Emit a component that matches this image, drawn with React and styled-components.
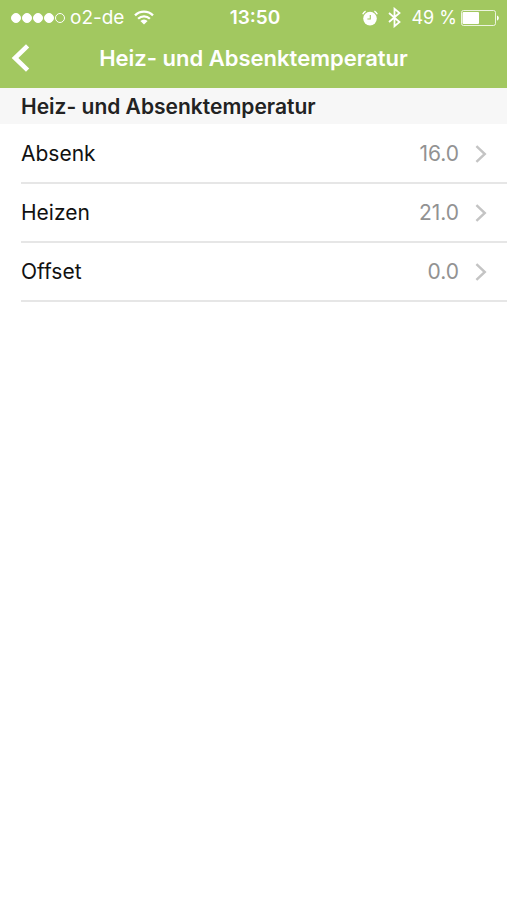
import React from 'react';
import styled, { createGlobalStyle } from 'styled-components';

const GlobalStyle = createGlobalStyle`
  * {
    box-sizing: border-box;
  }

  body {
    margin: 0;
    background-color: #fff;
    color: #111;
    font-family: Inter, 'Liberation Sans', sans-serif;
  }
`;

const Header = styled.header`
  background-color: #a2c860;
  color: #fff;
`;

const StatusBar = styled.div`
  display: grid;
  grid-template-columns: 1fr auto 1fr;
  align-items: center;
  height: 35px;
  padding: 0 8px 0 11px;
  font-size: 19px;
  line-height: 24px;
`;

const StatusGroup = styled.div`
  display: flex;
  align-items: center;
  justify-content: ${(props) => (props.$end ? 'flex-end' : 'flex-start')};
  gap: 10px;
  white-space: nowrap;
`;

const Carrier = styled.div`
  display: flex;
  align-items: center;
  gap: 5px;
`;

const Battery = styled.div`
  display: flex;
  align-items: center;
  gap: 4px;
  font-size: 18px;
`;

const Signal = styled.div`
  display: flex;
  gap: 1px;
`;

const Dot = styled.span`
  width: 10px;
  height: 10px;
  border: 1px solid #fff;
  border-radius: 50%;
  background-color: ${(props) => (props.$filled ? '#fff' : 'transparent')};
`;

const Time = styled.time`
  font-weight: 600;
`;

const NavBar = styled.nav`
  display: grid;
  grid-template-columns: 44px 1fr 44px;
  align-items: center;
  height: 53px;
  padding-bottom: 7px;
`;

const BackButton = styled.button`
  display: flex;
  align-items: center;
  height: 44px;
  padding: 0 0 0 11px;
  border: none;
  background: none;
  color: inherit;
  cursor: pointer;
`;

const Title = styled.h1`
  margin: 0;
  font-size: 22px;
  font-weight: 600;
  line-height: 28px;
  text-align: center;
  white-space: nowrap;
`;

const SectionTitle = styled.h2`
  margin: 0;
  padding: 5px 21px 3px;
  background-color: #f7f7f7;
  color: #222;
  font-size: 21px;
  font-weight: 600;
  line-height: 28px;
`;

const List = styled.ul`
  margin: 0;
  padding: 1px 0 0 21px;
  list-style: none;
`;

const Item = styled.li`
  border-bottom: 2px solid #e6e6e6;
`;

const RowButton = styled.button`
  display: flex;
  align-items: center;
  width: 100%;
  height: 57px;
  padding: 0 20px 0 0;
  border: none;
  background: none;
  color: inherit;
  font-family: inherit;
  font-size: 21px;
  line-height: 28px;
  text-align: left;
  cursor: pointer;
`;

const Value = styled.span`
  margin-left: auto;
  margin-right: 16px;
  color: #929292;
`;

const WifiIcon = () => (
  <svg width="20" height="15" viewBox="0 0 20 15" fill="none" stroke="#fff" strokeWidth="2.3">
    <path d="M1 5.4a12.8 12.8 0 0 1 18 0" />
    <path d="M4.1 8.7a8.4 8.4 0 0 1 11.8 0" />
    <path d="M10 14.6 6.4 11a5 5 0 0 1 7.2 0z" fill="#fff" stroke="none" />
  </svg>
);

const AlarmIcon = () => (
  <svg width="16" height="16" viewBox="0 0 16 16" fill="none">
    <circle cx="8" cy="8.6" r="6.8" fill="#fff" />
    <path d="M8.3 5v4H5.4" stroke="#a2c860" strokeWidth="1.1" />
    <path d="M.7 4.2A7 7 0 0 1 3.6 1.2M15.3 4.2A7 7 0 0 0 12.4 1.2" stroke="#fff" strokeWidth="1.4" />
  </svg>
);

const BluetoothIcon = () => (
  <svg width="13" height="21" viewBox="0 0 13 21" fill="none" stroke="#fff" strokeWidth="1.8">
    <path d="M1 6l10.5 9-5 4.2V1.8l5 4.2L1 15" />
  </svg>
);

const BatteryIcon = () => (
  <svg width="38" height="16" viewBox="0 0 38 16" fill="none">
    <rect x=".5" y=".5" width="34" height="15" rx="2" stroke="#fff" strokeOpacity=".8" />
    <rect x="1.5" y="2" width="16.5" height="12" rx="1" fill="#fff" />
    <path d="M36 5.4c2.4.9 2.4 4.3 0 5.2z" fill="#fff" />
  </svg>
);

const BackIcon = () => (
  <svg width="20" height="28" viewBox="0 0 20 28" fill="none" stroke="currentColor" strokeWidth="4.6">
    <path d="M16.6 1.8 4 14l12.6 12.2" />
  </svg>
);

const ChevronIcon = () => (
  <svg width="12" height="18" viewBox="0 0 12 18" fill="none" stroke="#c4c4c4" strokeWidth="2.4">
    <path d="M1.4 1.2 9.8 9l-8.4 7.8" />
  </svg>
);

const settings = [
  { label: 'Absenk', value: '16.0' },
  { label: 'Heizen', value: '21.0' },
  { label: 'Offset', value: '0.0' },
];

const App = () => {
  return (
    <>
      <GlobalStyle />
      <Header>
        <StatusBar>
          <StatusGroup>
            <Carrier>
              <Signal>
                <Dot $filled />
                <Dot $filled />
                <Dot $filled />
                <Dot $filled />
                <Dot />
              </Signal>
              <span>o2-de</span>
            </Carrier>
            <WifiIcon />
          </StatusGroup>
          <Time>13:50</Time>
          <StatusGroup $end>
            <AlarmIcon />
            <BluetoothIcon />
            <Battery>
              <span>49 %</span>
              <BatteryIcon />
            </Battery>
          </StatusGroup>
        </StatusBar>
        <NavBar>
          <BackButton aria-label="Zurück">
            <BackIcon />
          </BackButton>
          <Title>Heiz- und Absenktemperatur</Title>
        </NavBar>
      </Header>
      <main>
        <SectionTitle>Heiz- und Absenktemperatur</SectionTitle>
        <List>
          {settings.map((item) => (
            <Item key={item.label}>
              <RowButton>
                <span>{item.label}</span>
                <Value>{item.value}</Value>
                <ChevronIcon />
              </RowButton>
            </Item>
          ))}
        </List>
      </main>
    </>
  );
};

export default App;
